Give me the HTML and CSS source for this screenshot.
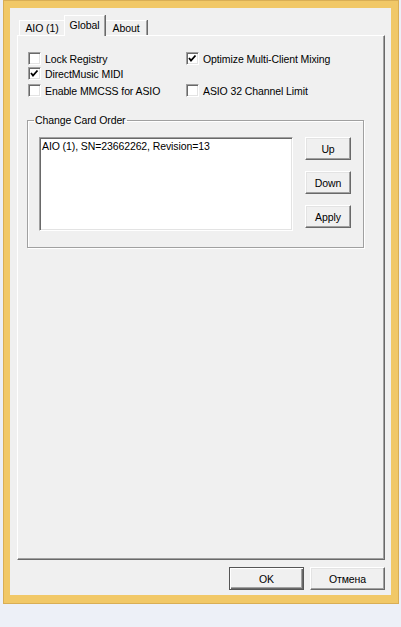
FILE: index.html
```html
<!DOCTYPE html>
<html>
<head>
<meta charset="utf-8">
<link rel="stylesheet" href="styles.css">
</head>
<body>
<div class="window">
  <div class="tabs">
    <div class="tab tab-aio">AIO (1)</div>
    <div class="tab tab-global active">Global</div>
    <div class="tab tab-about">About</div>
  </div>
  <div class="panel">
    <div class="options">
      <label class="check"><span class="box"></span>Lock Registry</label>
      <label class="check"><span class="box"><svg viewBox="0 0 11 11" width="11" height="11"><polyline points="2,5 4,7.5 8.5,2.5" fill="none" stroke="#000" stroke-width="1.8"/></svg></span>Optimize Multi-Client Mixing</label>
      <label class="check"><span class="box"><svg viewBox="0 0 11 11" width="11" height="11"><polyline points="2,5 4,7.5 8.5,2.5" fill="none" stroke="#000" stroke-width="1.8"/></svg></span>DirectMusic MIDI</label>
      <span></span>
      <label class="check"><span class="box"></span>Enable MMCSS for ASIO</label>
      <label class="check"><span class="box"></span>ASIO 32 Channel Limit</label>
    </div>
    <fieldset class="group">
      <legend>Change Card Order</legend>
      <div class="group-body">
        <div class="listbox"><div class="item">AIO (1), SN=23662262, Revision=13</div></div>
        <div class="side-buttons">
          <button class="btn side">Up</button>
          <button class="btn side">Down</button>
          <button class="btn side">Apply</button>
        </div>
      </div>
    </fieldset>
  </div>
  <div class="footer">
    <button class="btn dialog default">OK</button>
    <button class="btn dialog">Отмена</button>
  </div>
</div>
</body>
</html>
```
FILE: styles.css
```css
* { box-sizing: border-box; }
body {
  margin: 0;
  background: #edf0f7;
  font-family: "Liberation Sans", Arial, sans-serif;
  font-size: 10.5px;
  letter-spacing: -0.1px;
  color: #000;
}
.window {
  margin: 0 0 0 3px;
  width: 396px;
  height: 604px;
  border-style: solid;
  border-color: #f1c867;
  border-width: 8px 8px 9px 7px;
  outline: 1px solid #d9ae55;
  outline-offset: -1px;
  background: #f0f0f0;
  padding: 7px 6px 0 7px;
}
.tabs {
  display: flex;
  align-items: flex-end;
  height: 20px;
  padding-left: 2px;
}
.tab {
  height: 15px;
  line-height: 14px;
  text-align: center;
  border: 1px solid;
  border-bottom: none;
  border-color: #fff #a0a0a0 transparent #fff;
  box-shadow: 1px 0 #696969;
  background: #f0f0f0;
}
.tab-aio { width: 45px; border-right: none; box-shadow: none; }
.tab-global { width: 41px; }
.tab-about { width: 42px; }
.tab.active {
  height: 21px;
  line-height: 19px;
  margin-bottom: -1px;
  position: relative;
  z-index: 1;
}
.panel {
  width: 368px;
  height: 525px;
  border: 1px solid;
  border-color: #fff #696969 #696969 #fff;
  box-shadow: inset -1px -1px #a0a0a0;
  padding: 16px 0 0 9px;
}
.options {
  display: grid;
  grid-template-columns: 158px auto;
  grid-template-rows: 15px 17px 13px;
  padding-left: 1px;
}
.check {
  display: flex;
  align-items: center;
  gap: 4px;
  height: 13px;
  white-space: nowrap;
}
.box {
  width: 13px;
  height: 13px;
  flex: none;
  background: #fff;
  border: 1px solid;
  border-color: #a0a0a0 #fff #fff #a0a0a0;
  box-shadow: inset 1px 1px #696969, inset -1px -1px #e3e3e3;
  display: flex;
  align-items: center;
  justify-content: center;
}
.box svg { display: block; }
.group {
  margin: 17px 0 0 0;
  width: 337px;
  padding: 0;
  border: 1px solid #a0a0a0;
  box-shadow: inset 1px 1px #fff, 1px 1px #fff;
  min-width: 0;
}
.group legend {
  margin-left: 6px;
  padding: 0 1px;
  line-height: 13px;
}
.group-body {
  display: flex;
  gap: 12px;
  padding: 10px 0 16px 11px;
}
.listbox {
  width: 254px;
  height: 94px;
  background: #fff;
  border: 1px solid;
  border-color: #a0a0a0 #fff #fff #a0a0a0;
  box-shadow: inset 1px 1px #696969, inset -1px -1px #e3e3e3;
  padding: 2px 2px;
}
.item { line-height: 13px; white-space: nowrap; }
.side-buttons {
  display: flex;
  flex-direction: column;
  gap: 11px;
}
.btn {
  font: inherit;
  letter-spacing: inherit;
  color: #000;
  background: #f0f0f0;
  border: 1px solid;
  border-color: #fff #696969 #696969 #fff;
  box-shadow: inset -1px -1px #a0a0a0, inset 1px 1px #e3e3e3;
  padding: 0;
  margin: 0;
}
.btn.side { width: 46px; height: 23px; }
.footer {
  display: flex;
  justify-content: flex-end;
  gap: 6px;
  margin-top: 7px;
}
.btn.dialog { width: 75px; height: 23px; }
.btn.default {
  border-color: #555;
  box-shadow: inset 1px 1px #fff, inset -1px -1px #696969, inset -2px -2px #a0a0a0;
}
```
